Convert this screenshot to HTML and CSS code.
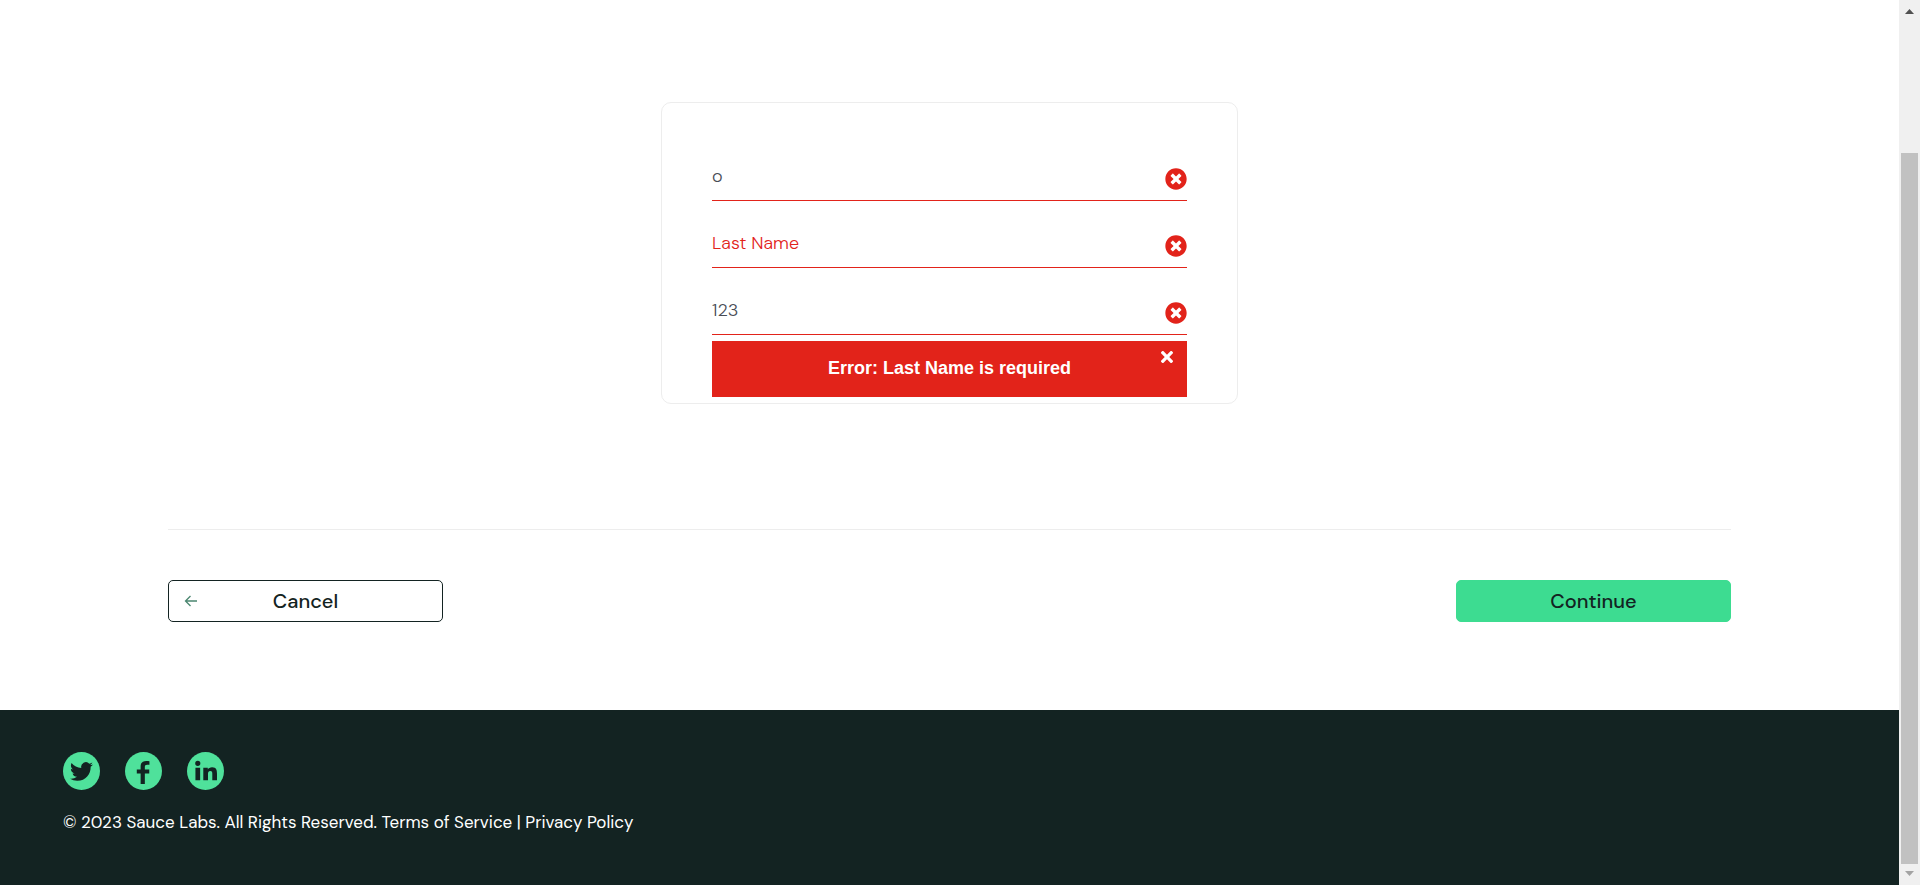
FILE: index.html
```html
<!DOCTYPE html>
<html lang="en">
<head>
<meta charset="utf-8">
<meta name="viewport" content="width=device-width, initial-scale=1">
<title>Checkout: Your Information</title>
<link rel="stylesheet" href="styles.css">
</head>
<body>
<svg class="symbols" aria-hidden="true">
  <symbol id="times-circle" viewBox="0 0 512 512">
    <path fill="currentColor" d="M256 8C119 8 8 119 8 256s111 248 248 248 248-111 248-248S393 8 256 8zm121.600 313.100c4.700 4.700 4.700 12.300 0 17L338 377.600c-4.700 4.700-12.300 4.700-17 0L256 312l-65.100 65.600c-4.700 4.700-12.300 4.700-17 0L134.400 338c-4.700-4.700-4.700-12.300 0-17l65.600-65-65.600-65.100c-4.700-4.700-4.700-12.300 0-17l39.600-39.600c4.700-4.700 12.300-4.700 17 0l65 65.700 65.100-65.600c4.700-4.700 12.300-4.700 17 0l39.600 39.600c4.700 4.700 4.700 12.300 0 17L312 256l65.600 65.100z"/>
  </symbol>
</svg>
<div class="page">
  <main class="checkout">
    <form class="form">
      <section class="card">
        <div class="fields">
          <div class="field">
            <input class="field-input" type="text" aria-label="First Name" placeholder="First Name" value="o">
            <svg class="field-icon" aria-hidden="true"><use href="#times-circle"/></svg>
          </div>
          <div class="field">
            <input class="field-input" type="text" aria-label="Last Name" placeholder="Last Name">
            <svg class="field-icon" aria-hidden="true"><use href="#times-circle"/></svg>
          </div>
          <div class="field">
            <input class="field-input" type="text" aria-label="Zip/Postal Code" placeholder="Zip/Postal Code" value="123">
            <svg class="field-icon" aria-hidden="true"><use href="#times-circle"/></svg>
          </div>
        </div>
        <div class="error" role="alert">
          <h3 class="error-text">Error: Last Name is required</h3>
          <button class="error-close" type="button" aria-label="Dismiss error">
            <svg class="error-x" viewBox="0 0 352 512" aria-hidden="true"><path fill="currentColor" d="M242.720 256l100.070-100.070c12.280-12.280 12.280-32.190 0-44.480l-22.240-22.240c-12.280-12.280-32.190-12.280-44.480 0L176 189.280 75.930 89.210c-12.280-12.280-32.190-12.280-44.480 0L9.210 111.450c-12.280 12.280-12.280 32.190 0 44.480L109.280 256 9.210 356.070c-12.280 12.280-12.280 32.190 0 44.480l22.240 22.240c12.280 12.280 32.200 12.280 44.480 0L176 322.720l100.070 100.070c12.280 12.280 32.200 12.280 44.480 0l22.240-22.240c12.280-12.280 12.280-32.190 0-44.480L242.720 256z"/></svg>
          </button>
        </div>
      </section>
      <div class="actions">
        <button class="button button-cancel" type="button">
          <svg class="button-arrow" viewBox="0 0 14 14" aria-hidden="true"><path d="M6.500 2 1.500 7l5 5M1.500 7H13" fill="none" stroke="currentColor" stroke-width="1.300"/></svg>
          Cancel
        </button>
        <button class="button button-continue" type="button">Continue</button>
      </div>
    </form>
  </main>
  <footer class="footer">
    <nav class="social" aria-label="Social media">
      <a class="social-link" href="#" aria-label="Twitter">
        <svg class="social-mark" viewBox="0 0 24 24" aria-hidden="true"><path fill="currentColor" d="M23.950 4.570a10 10 0 0 1-2.820.77 4.960 4.960 0 0 0 2.160-2.720c-.95.550-2 .950-3.130 1.180a4.920 4.920 0 0 0-8.380 4.480C7.690 8.090 4.070 6.130 1.640 3.160a4.820 4.820 0 0 0-.67 2.480c0 1.710.870 3.210 2.190 4.100a4.900 4.900 0 0 1-2.230-.62v.06a4.920 4.920 0 0 0 3.950 4.830 5 5 0 0 1-2.210.08 4.940 4.940 0 0 0 4.600 3.420A9.870 9.870 0 0 1 0 19.540a13.990 13.990 0 0 0 7.560 2.210c9.050 0 14-7.500 14-13.980 0-.21 0-.42-.02-.63a9.940 9.940 0 0 0 2.460-2.550z"/></svg>
      </a>
      <a class="social-link" href="#" aria-label="Facebook">
        <svg class="social-mark" viewBox="0 0 24 24" aria-hidden="true"><path fill="currentColor" d="M9 25V14H5V9.900h4V6.800C9 2.600 11.200 1 15 1c1.200 0 2.300.1 3.200.3v3.600h-2.400c-1.800 0-2.400.8-2.400 2.300v2.700h4.600V14h-4.600v11z"/></svg>
      </a>
      <a class="social-link" href="#" aria-label="LinkedIn">
        <svg class="social-mark" viewBox="0 0 24 24" aria-hidden="true"><path fill="currentColor" d="M1.500 8h4.900v13H1.500zM3.950.8a2.700 2.700 0 1 1 0 5.400 2.700 2.700 0 0 1 0-5.400zM9.700 8h4.700v1.900c.7-1.200 2.300-2.300 4.500-2.300 4.500 0 5.100 3 5.100 6.700V21h-4.900v-6c0-1.600 0-3.400-2.100-3.400s-2.400 1.700-2.400 3.300V21H9.700z"/></svg>
      </a>
    </nav>
    <p class="copy">© 2023 Sauce Labs. All Rights Reserved. Terms of Service | Privacy Policy</p>
  </footer>
</div>
<div class="scrollbar" aria-hidden="true">
  <svg class="scroll-arrow" viewBox="0 0 9 5"><path fill="#505050" d="M4.500 0 9 5H0z"/></svg>
  <div class="scroll-track"><div class="scroll-thumb"></div></div>
  <svg class="scroll-arrow" viewBox="0 0 9 5"><path fill="#a3a3a3" d="M0 0h9L4.500 5z"/></svg>
</div>
</body>
</html>
```
FILE: styles.css
```css
* { box-sizing: border-box; }

body {
  display: flex;
  height: 100vh;
  margin: 0;
  overflow: hidden;
  background: #fff;
  color: #132322;
  font-family: "DM Sans", Inter, sans-serif;
}

.symbols { display: none; }

.page {
  display: flex;
  flex: 1;
  flex-direction: column;
  min-width: 0;
}

.checkout { padding: 102px 168px 88px; }

.card {
  width: 100%;
  max-width: 577px;
  margin: 0 auto 125px;
  padding: 56px 50px 6px;
  border: 1px solid #ededed;
  border-radius: 10px;
}

.fields {
  display: flex;
  flex-direction: column;
  gap: 25px;
}

.field {
  display: flex;
  align-items: flex-start;
  height: 42px;
  border-bottom: 1px solid #e2231a;
}

.field-input {
  flex: 1;
  min-width: 0;
  height: 34px;
  padding: 0;
  border: 0;
  outline: 0;
  background: transparent;
  color: #484c55;
  font-family: inherit;
  font-size: 18px;
  font-weight: 300;
}

.field-input::placeholder {
  color: #e2231a;
  opacity: 1;
}

.field-icon {
  width: 22px;
  height: 22px;
  margin-top: 9px;
  color: #e2231a;
}

.error {
  position: relative;
  display: flex;
  align-items: flex-start;
  justify-content: center;
  height: 56px;
  margin-top: 6px;
  padding-top: 17px;
  background: #e2231a;
  color: #fff;
}

.error-text {
  margin: 0;
  font-family: "Liberation Sans", sans-serif;
  font-size: 18px;
  font-weight: 700;
  line-height: 20px;
}

.error-close {
  position: absolute;
  top: 7px;
  right: 14px;
  display: flex;
  padding: 0;
  border: 0;
  background: transparent;
  color: inherit;
}

.error-x {
  width: 12px;
  height: 18px;
}

.actions {
  display: flex;
  justify-content: space-between;
  padding-top: 50px;
  border-top: 1px solid #ededed;
}

.button {
  position: relative;
  width: 275px;
  height: 42px;
  padding: 0;
  border: 1px solid #132322;
  border-radius: 5px;
  background: #fff;
  color: #132322;
  font-family: inherit;
  font-size: 20px;
  font-weight: 500;
}

.button-continue {
  border-color: #3ddc91;
  background: #3ddc91;
}

.button-arrow {
  position: absolute;
  top: 13px;
  left: 15px;
  width: 14px;
  height: 14px;
  color: #4b8670;
}

.footer {
  flex: 1;
  padding: 42px 63px;
  background: #132322;
  color: #fff;
}

.social {
  display: flex;
  gap: 25px;
}

.social-link {
  display: flex;
  align-items: center;
  justify-content: center;
  width: 37px;
  height: 38px;
  border-radius: 50%;
  background: #4fe19b;
  color: #132322;
}

.social-mark {
  width: 23px;
  height: 23px;
  overflow: visible;
}

.copy {
  margin: 20px 0 0;
  font-size: 17px;
  line-height: 24px;
}

.scrollbar {
  display: flex;
  flex-direction: column;
  align-items: center;
  width: 21px;
  padding: 9px 2px;
  background: #f0f0f0;
}

.scroll-arrow {
  width: 9px;
  height: 5px;
}

.scroll-track {
  display: flex;
  flex: 1;
  flex-direction: column;
  justify-content: flex-end;
  align-self: stretch;
  padding: 7px 0;
}

.scroll-thumb {
  height: 84.4%;
  background: #c1c1c1;
}
```
